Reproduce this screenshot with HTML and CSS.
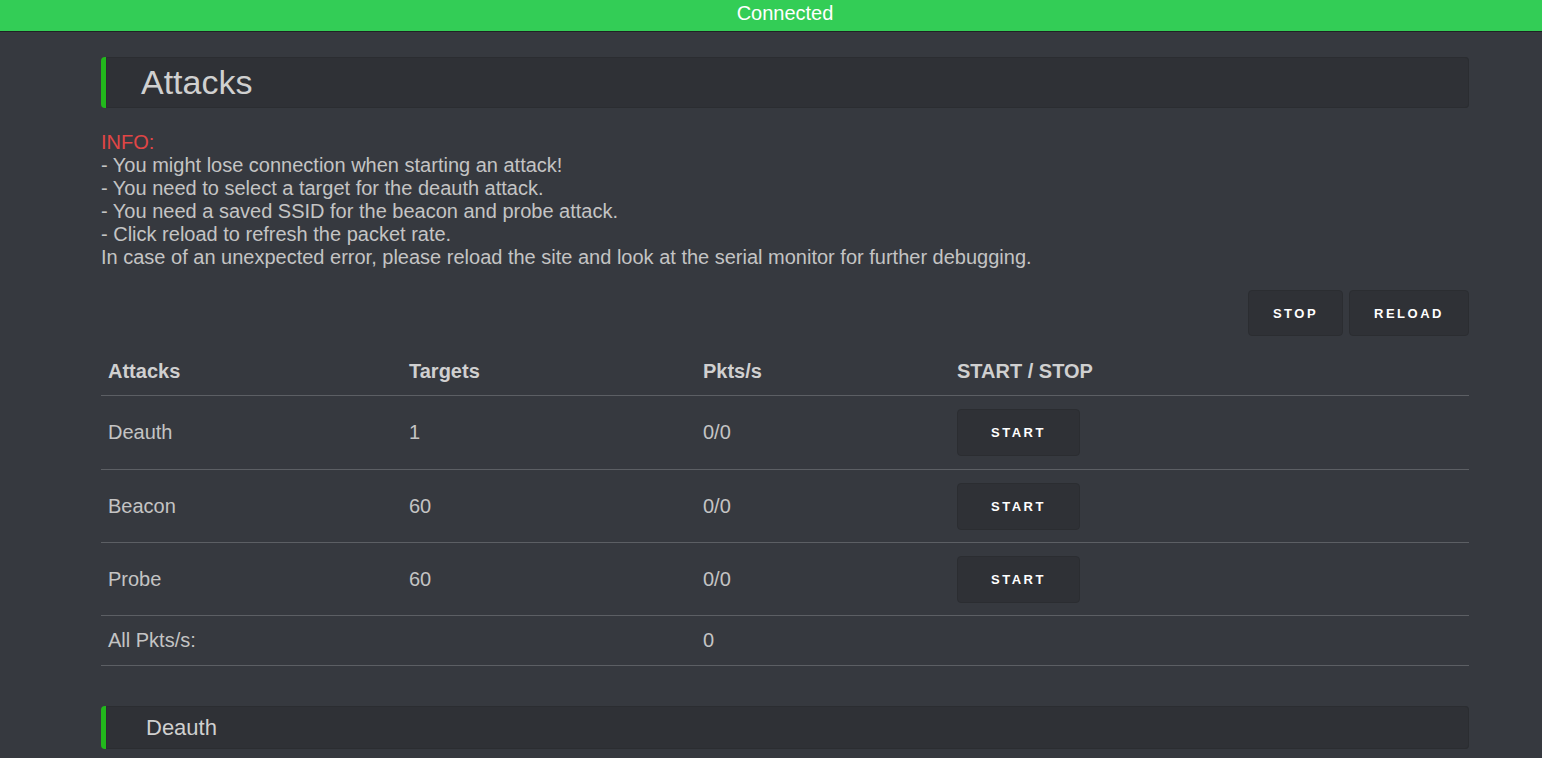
FILE: index.html
```html
<!DOCTYPE html>
<html>
<head>
<meta charset="utf-8">
<link rel="stylesheet" href="styles.css">
</head>
<body>
<div class="status">Connected</div>
<main class="container">
  <div class="heading"><h1>Attacks</h1></div>
  <p class="info">
    <span class="red">INFO:</span><br>
    - You might lose connection when starting an attack!<br>
    - You need to select a target for the deauth attack.<br>
    - You need a saved SSID for the beacon and probe attack.<br>
    - Click reload to refresh the packet rate.<br>
    In case of an unexpected error, please reload the site and look at the serial monitor for further debugging.
  </p>
  <div class="actions">
    <button class="btn btn-stop">STOP</button>
    <button class="btn btn-reload">RELOAD</button>
  </div>
  <table class="attacks">
    <colgroup><col class="c1"><col class="c2"><col class="c3"><col class="c4"></colgroup>
    <thead>
      <tr><th>Attacks</th><th>Targets</th><th>Pkts/s</th><th>START / STOP</th></tr>
    </thead>
    <tbody>
      <tr class="first"><td>Deauth</td><td>1</td><td>0/0</td><td><button class="btn btn-start">START</button></td></tr>
      <tr><td>Beacon</td><td>60</td><td>0/0</td><td><button class="btn btn-start">START</button></td></tr>
      <tr><td>Probe</td><td>60</td><td>0/0</td><td><button class="btn btn-start">START</button></td></tr>
      <tr class="total"><td>All Pkts/s:</td><td></td><td>0</td><td></td></tr>
    </tbody>
  </table>
  <div class="heading small"><h2>Deauth</h2></div>
</main>
</body>
</html>
```

FILE: styles.css
```css
html {
  overflow: hidden;
  background: #36393f;
}
body {
  margin: 0;
  padding: 0;
  width: 1570px;
  background: #36393f;
  font-family: "Liberation Sans", Arial, sans-serif;
  color: #c4c4c4;
}
.status {
  background: #33cd56;
  color: #fff;
  text-align: center;
  font-size: 20px;
  height: 31px;
  line-height: 26px;
  border-bottom: 1px solid #202225;
}
.container {
  width: 1368px;
  margin: 0 auto;
  padding-top: 25px;
}
.heading {
  background: #2f3136;
  border-left: 5px solid #22b81c;
  border-radius: 4px;
  height: 51px;
  display: flex;
  align-items: center;
  padding-left: 35px;
  box-shadow: inset 0 0 0 1px #2b2d31;
}
.heading h1 {
  margin: 0;
  font-size: 34px;
  font-weight: normal;
  color: #d0d0d0;
}
.heading.small {
  height: 43px;
  padding-left: 40px;
  margin-top: 40px;
}
.heading h2 {
  margin: 0;
  font-size: 22px;
  font-weight: normal;
  color: #d0d0d0;
}
.info {
  margin: 23px 0 0;
  font-size: 20px;
  line-height: 23px;
}
.red { color: #e04646; }
.actions {
  display: flex;
  justify-content: flex-end;
  gap: 6px;
  margin-top: 21px;
}
.btn {
  background: #2f3136;
  border: 1px solid #2b2d31;
  border-radius: 4px;
  color: #fff;
  font-family: "Liberation Sans", Arial, sans-serif;
  font-weight: bold;
  font-size: 13px;
  letter-spacing: 2.5px;
  height: 46px;
  cursor: pointer;
}
.btn-stop { width: 95px; }
.btn-reload { width: 120px; }
.btn-start { width: 123px; height: 47px; }
.attacks {
  width: 100%;
  border-collapse: collapse;
  margin-top: 10px;
}
.c1 { width: 301px; }
.c2 { width: 294px; }
.c3 { width: 254px; }
.c4 { width: 519px; }
.attacks th {
  text-align: left;
  font-size: 20px;
  font-weight: bold;
  color: #d0d0d0;
  padding: 13px 7px 12px;
  height: 24px;
  border-bottom: 1px solid #5c5f64;
}
.attacks td {
  font-size: 20px;
  padding: 12px 7px;
  height: 48px;
  border-bottom: 1px solid #5c5f64;
}
.attacks tr.first td {
  padding-bottom: 13px;
}
.attacks tr.total td {
  height: 25px;
}
```
